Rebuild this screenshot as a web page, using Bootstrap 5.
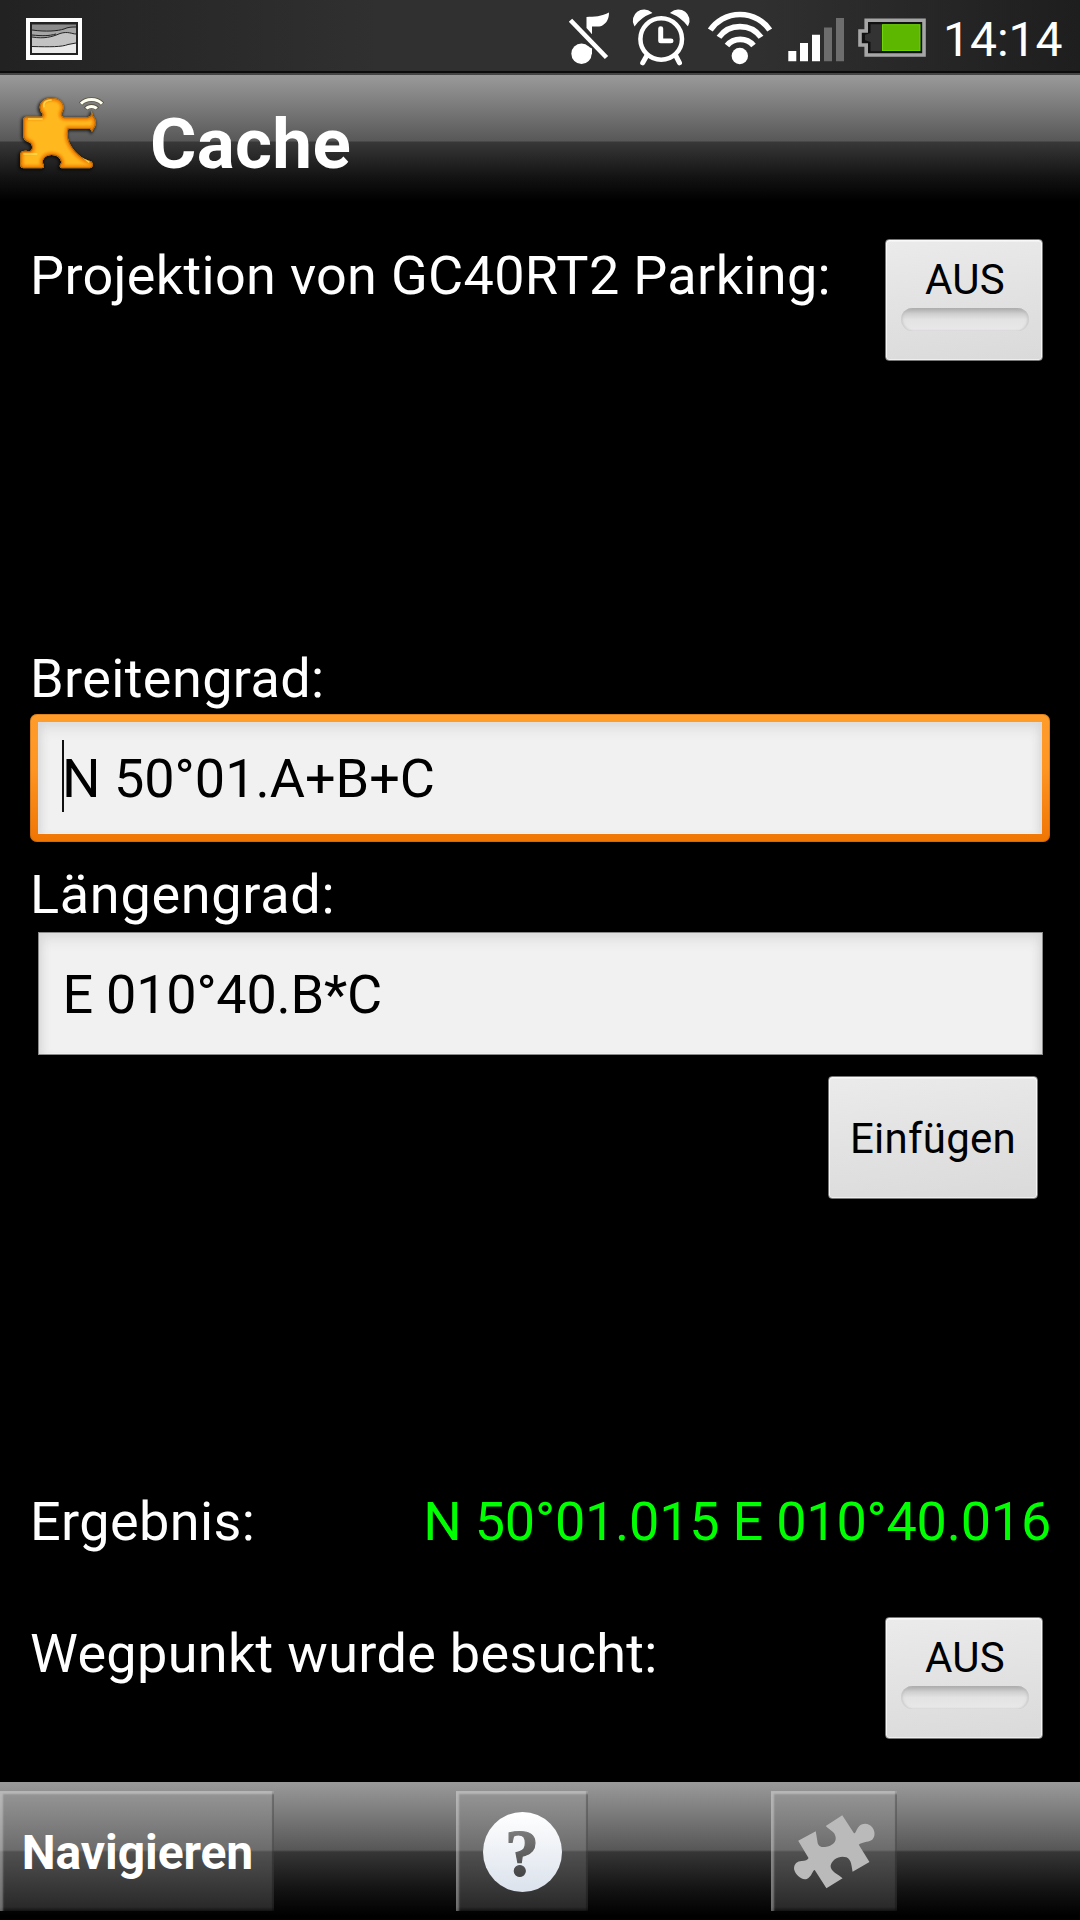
<!DOCTYPE html>
<html lang="de">
<head>
<meta charset="utf-8">
<meta name="viewport" content="width=device-width, initial-scale=1">
<title>Cache</title>
<link href="https://cdn.jsdelivr.net/npm/bootstrap@5.3.0/dist/css/bootstrap.min.css" rel="stylesheet">
<style>
body{width:1080px;height:1920px;overflow:hidden;background:#000;color:#fff;font-family:Roboto,"Noto Sans",sans-serif}
svg{display:block;flex:none}
.statusbar{height:75px;padding:0 15px 0 24px;background:linear-gradient(90deg,#222,#303030 35%,#303030 70%,#1e1e1e);box-shadow:inset 0 -2px #454545,inset 0 -4px #0c0c0c}
.clock{font-size:48px;line-height:56px;padding-top:12px;width:122px;margin-left:15px}
.titlebar{height:130px;padding-left:15px;background:linear-gradient(#9a9a9a,#585858 66px,#383838 67px,#131313 102px,#000 126px)}
.titlebar h1{font-size:71px;line-height:82px;letter-spacing:.3px;margin:28px 0 0 30px}
.txt{font-size:54px;line-height:64px;white-space:nowrap}
.s-a{letter-spacing:.32px}.s-b{letter-spacing:.4px}.s-c{letter-spacing:.7px}.s-d{letter-spacing:-.24px}
main{padding:0 30px}
.droid,.droid:hover{background:linear-gradient(172deg,#ebebeb,#e2e2e2 50%,#dadada);border:1px solid #777;border-radius:4px;color:#000;box-shadow:inset 0 0 0 1px #fff8,inset 0 1px 0 1px #fff6;font-size:42px;line-height:50px;letter-spacing:.25px;padding:0}
.toggle,.toggle:hover{width:158px;height:122px;margin-right:7px;padding:15px 0 0 2px}
.slot{width:128px;height:23px;border-radius:12px;margin-top:3px;background:linear-gradient(#a9a9a9,#cfcfcf 25%,#e3e3e3 50%,#eae8ea);box-shadow:inset 2px 0 2px #bbb8,inset -2px 0 2px #bbb8}
.projection{margin-top:34px}
.projection .txt{padding-top:5px}
.lat-label{margin-top:286px}
.lat-box{height:128px;padding:8px;border-radius:7px;background:linear-gradient(#ff9c2a,#ff9624 40%,#f07503);margin-top:3px;box-shadow:inset 0 0 0 1px #a85a0a66}
.form-control.coord,.form-control.coord:focus{height:100%;border:0;border-radius:0;background:#f1f1f1;color:#000;box-shadow:inset 0 8px 14px -3px #d8d8d8,inset 8px 0 12px -8px #ccc,inset -8px 0 12px -8px #ccc,inset 0 0 0 1px #fff8;padding:0 0 0 24px}
.caret{left:32px;top:26px;width:2px;height:72px;background:#111}
.lon-label{margin-top:21px}
.lon-box{height:123px;margin:5px 7px 0 8px;border:1px solid #8a8a8a}
.lon-box .form-control.coord{padding:1px 0 0 23.5px}
.insert,.insert:hover{width:210px;height:123px;margin:21px 12px 0 0;padding-top:2px}
.result{margin-top:291px}
.result .green{color:#0f0;margin-right:-1px}
.visited{margin-top:63px}
.visited .txt{padding-top:5px}
.footbar{height:138px;margin-top:43px;padding-top:9px;background:linear-gradient(#9a9a9a,#575757 68px,#363636 70px,#141414 106px,#000 134px)}
.keybtn,.keybtn:hover{height:120px;padding:0;border:0;border-radius:0;color:#fff;font-size:48px;line-height:56px;font-weight:700;letter-spacing:-.08px;background:linear-gradient(#969696,#6c6c6c 59px,#505050 61px,#2a2a2a 116px,#141414);box-shadow:inset 3px 3px 2px #fff5,inset -2px 0 1px #0004}
.keybtn .cap{padding:3px 0 0 1px;display:block}
.k1{width:274px}.k2{width:132px;margin-left:182px}.k3{width:126px;margin-left:183px}
</style>
</head>
<body>
<div class="d-flex flex-column h-100">
<header>
<div class="statusbar d-flex">
  <svg width="60" height="71" viewBox="24 0 60 71">
    <rect x="26" y="18" width="56" height="42" fill="#fff"/><rect x="30" y="22" width="48" height="33" fill="#222"/>
    <rect x="32" y="24.500" width="44" height="28.500" fill="#8b8b8b"/>
    <path d="M32 30C46 32 58 31 64 29C68 27 72 27 76 27V53H32Z" fill="#a5a5a5"/>
    <path d="M32 37C44 39 52 37 60 33.500C68 31 72 34 76 34V53H32Z" fill="#c3c3c3"/>
    <path d="M32 46.500C50 47 62 47 68 44.500L76 43V53H32Z" fill="#e9e9e9"/>
    <path d="M32 30C46 32 58 31 64 29C68 27 72 27 76 27M32 35C42 36 49 36 56 34M32 37C44 39 52 37 60 33.500C68 31 72 34 76 34M32 46.500C50 47 62 47 68 44.500L76 43" fill="none" stroke="#222" stroke-width="1"/>
  </svg>
  <svg class="ms-auto" width="364" height="71" viewBox="564 0 364 71">
    <circle cx="581.500" cy="53.700" r="10.200" fill="#fff"/>
    <circle cx="661.200" cy="39" r="20.800" fill="none" stroke="#fff" stroke-width="4.500"/>
    <circle cx="739.800" cy="56" r="8.200" fill="#fff"/>
    <g transform="scale(1 .968)">
    <path fill="#fff" d="M586.500 17.500C594 17.500 602 17 609 13C609 19 607 24 602 26.500C598 28 595 27 592 27.500V35.500L586.500 29ZM584 47L588 48L592 50V56H584Z"/>
    <path d="M570.500 21L606.500 59.500" stroke="#fff" stroke-width="4.600"/>
    <path d="M634.700 25.800A10.500 10.500 0 0 1 651 13.200Q641 17 634.700 25.800ZM687.700 25.800A10.500 10.500 0 0 0 671.400 13.200Q681 17 687.700 25.800Z" fill="#fff" stroke="#fff" stroke-width="1.500"/>
    <path d="M646.500 58L642.700 65M676 58L679.500 65" stroke="#fff" stroke-width="5" stroke-linecap="round"/>
    <path d="M660.700 29.500V42.300H671" fill="none" stroke="#fff" stroke-width="5" stroke-linecap="round" stroke-linejoin="round"/>
    <path d="M710.300 31A35.500 35.500 0 0 1 769.700 31M719 38.500A25.500 25.500 0 0 1 761 38.500M727 47A17 17 0 0 1 753.500 47" fill="none" stroke="#fff" stroke-width="5.800"/>
    <g fill="#fff"><path d="M788.300 52.700h8v10.700h-8ZM800 44.500h8v18.900h-8ZM812 36h8v27.400h-8Z"/><path d="M824 28.300h8v35.100h-8ZM836 18.500h8v44.900h-8Z" fill="#6d6d6d"/></g>
    <path d="M866.200 21H924V56.800H866.200V46.500H860V32H866.200Z" fill="#111" stroke="#a6a6a6" stroke-width="3.600"/>
    <path d="M870.500 25H882V53H870.500V43.500L865 41.500V36L870.500 34Z" fill="#333"/>
    <rect x="882.500" y="25.500" width="37.500" height="26.700" fill="#5db700" stroke="#6fd600"/>
    </g>
  </svg>
  <div class="clock">14:14</div>
</div>
<div class="titlebar d-flex">
  <svg width="105" height="115" viewBox="0 -15 315 345">
    <defs><filter id="soft" x="-20%" y="-20%" width="140%" height="140%"><feGaussianBlur stdDeviation="5"/></filter>
    <path id="man" d="M78 110H124C131 106 128 102 123 96C112 76 125 54 155 54C185 54 198 76 187 96C183 104 185 110 193 112L262 112L272 108L275 92L279 108C290 118 290 137 280 148L276 155L270 147H205C199 170 206 192 224 213C242 233 258 241 272 243C281 249 281 262 270 265H185C177 262 178 255 184 248C182 234 171 225 155 225C138 225 128 236 128 248C134 256 134 263 126 265H70C60 263 60 255 61 248V222C62 214 70 211 82 213C92 215 97 210 96 200C95 186 86 188 78 182C70 177 70 172 70 165V120C70 113 73 110 78 110Z"/>
    <clipPath id="manclip"><use href="#man"/></clipPath></defs>
    <g transform="translate(-45 0)">
    <use href="#man" fill="#000" stroke="#000" stroke-width="6" opacity=".7" filter="url(#soft)" transform="translate(-3 3)"/>
    <use href="#man" fill="#ffb91e"/>
    <g clip-path="url(#manclip)"><use href="#man" fill="none" stroke="#f17c00" stroke-width="17" filter="url(#soft)"/><use href="#man" fill="none" stroke="#a86608" stroke-width="5"/>
    <path d="M132 82C128 65 142 60 155 60M84 117H128M212 150C207 182 222 208 250 233L268 247M70 222L112 222" fill="none" stroke="#ffe35a" stroke-width="5" opacity=".8"/></g>
    <path d="M242 72C257 54 292 54 307 72M257 87C265 76 284 76 292 87" fill="none" stroke="#5b5540" stroke-width="14"/>
    <path d="M243 71C258 54 291 54 306 71M259 86C266 77 283 77 290 86" fill="none" stroke="#fffff2" stroke-width="9"/>
    </g>
  </svg>
  <h1 class="fw-bold">Cache</h1>
</div>
</header>

<main class="d-flex flex-column">
  <div class="projection d-flex justify-content-between">
    <div class="txt s-a">Projektion von GC40RT2 Parking:</div>
    <button class="btn droid toggle d-flex flex-column align-items-center justify-content-start" type="button"><span>AUS</span><span class="slot"></span></button>
  </div>
  <label class="txt s-b lat-label" for="lat">Breitengrad:</label>
  <div class="lat-box position-relative">
    <input id="lat" class="form-control coord txt" type="text" value="N 50°01.A+B+C">
    <span class="caret position-absolute"></span>
  </div>
  <label class="txt s-c lon-label" for="lon">Längengrad:</label>
  <div class="lon-box"><input id="lon" class="form-control coord txt s-d" type="text" value="E 010°40.B*C"></div>
  <button class="btn droid insert align-self-end" type="button">Einfügen</button>
  <div class="result d-flex justify-content-between">
    <div class="txt s-b">Ergebnis:</div><div class="txt s-d green">N 50°01.015 E 010°40.016</div>
  </div>
  <div class="visited d-flex justify-content-between">
    <div class="txt s-a">Wegpunkt wurde besucht:</div>
    <button class="btn droid toggle d-flex flex-column align-items-center justify-content-start" type="button"><span>AUS</span><span class="slot"></span></button>
  </div>
</main>

<footer class="footbar d-flex align-items-start">
  <button class="btn keybtn k1" type="button"><span class="cap">Navigieren</span></button>
  <button class="btn keybtn k2" type="button" aria-label="Hilfe">
    <svg width="132" height="120" viewBox="456 1791 132 120">
      <defs><linearGradient id="disc" x2="0" y2="1"><stop stop-color="#fff"/><stop offset="1" stop-color="#dbe2ec"/></linearGradient>
      <linearGradient id="ink" x2="0" y2="1"><stop offset=".2" stop-color="#7c7c7c"/><stop offset=".8" stop-color="#454545"/></linearGradient></defs>
      <ellipse cx="522.500" cy="1852" rx="39.500" ry="40" fill="url(#disc)"/>
      <text x="522" y="1876" text-anchor="middle" font-family="Liberation Serif" font-weight="700" font-size="68" fill="url(#ink)" stroke="url(#ink)" stroke-width="1.200">?</text>
    </svg>
  </button>
  <button class="btn keybtn k3" type="button" aria-label="Puzzle">
    <svg width="126" height="120" viewBox="671 63 366 360" preserveAspectRatio="none">
      <path d="M750 212L801 184L806 215C807 229 818 232 828 231C850 228 863 215 858 198C855 185 845 183 830 168L878 136L912 190C918 190 918 180 925 171C935 158 955 158 965 172C975 186 973 202 965 209C950 218 935 215 926 224L957 276L908 305C905 290 905 268 890 262C870 255 848 268 844 288C845 305 865 312 879 325L832 355L798 300C792 300 790 320 775 327C760 332 742 315 738 298C737 280 748 274 760 273C770 273 778 270 780 264Z" fill="#bababa"/>
    </svg>
  </button>
</footer>
</div>
<script src="https://cdn.jsdelivr.net/npm/bootstrap@5.3.0/dist/js/bootstrap.bundle.min.js"></script>
</body>
</html>
